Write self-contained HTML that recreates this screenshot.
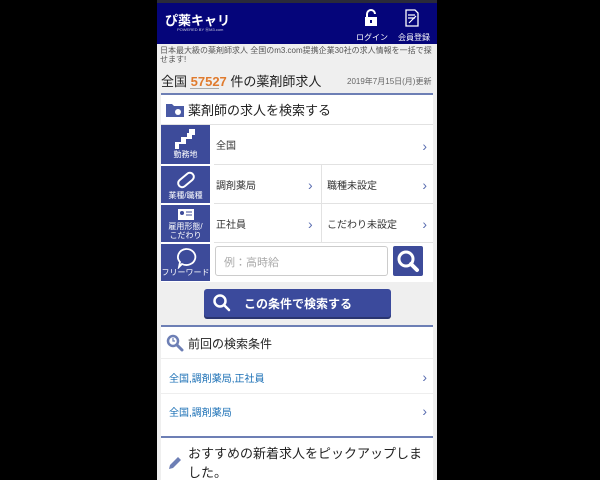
<!DOCTYPE html>
<html><head><meta charset="utf-8"><style>
*{margin:0;padding:0;box-sizing:border-box}
body{width:600px;height:480px;background:#000;font-family:"Liberation Sans","Noto Sans CJK JP",sans-serif;overflow:hidden;position:relative}
#p{position:absolute;left:157px;top:0;width:280px;height:480px;background:#efefef;overflow:hidden}
.hd{height:44px;background:#05057a;position:relative;color:#fff;border-top:3px solid #2a2a3a}
.abs{position:absolute}
.card{position:absolute;left:4px;width:272px;background:#fff}
.chev{position:absolute;color:#5a6db0;font-size:14px}
.ic{position:absolute;left:4px;width:49px;background:#3d4b9a;color:#fff;font-size:8px;text-align:center}
.row{position:absolute;left:53px;right:0;border-bottom:1px solid #e2e2e2;font-size:10px;color:#333}
</style></head><body><div id="p">
<div class="hd">
 <div class="abs" style="left:8px;top:7px;font-size:13px;font-weight:bold;letter-spacing:0">ぴ薬キャリ</div>
 <div class="abs" style="left:20px;top:24px;font-size:4px;color:#ccd">POWERED BY ⓂM3.com</div>
 <svg class="abs" style="left:206px;top:6px" width="16" height="18" viewBox="0 0 16 18"><path d="M4 8V5a4 4 0 0 1 8 0" fill="none" stroke="#fff" stroke-width="2"/><rect x="2" y="8" width="12" height="9" fill="#fff"/><rect x="7" y="11" width="2" height="3" fill="#05057a"/></svg>
 <svg class="abs" style="left:247px;top:6px" width="16" height="18" viewBox="0 0 16 18"><path d="M2 1h9l3 3v13H2z" fill="none" stroke="#fff" stroke-width="1.3"/><path d="M4 6h7M4 9h7M5 14l7-7" stroke="#fff" stroke-width="1.2"/></svg>
 <div class="abs" style="left:199px;top:29px;font-size:8px">ログイン</div>
 <div class="abs" style="left:241px;top:29px;font-size:8px">会員登録</div>
</div>
<div class="abs" style="left:3px;top:46px;width:276px;font-size:8px;line-height:9px;color:#555">日本最大級の薬剤師求人 全国のm3.com提携企業30社の求人情報を一括で探せます!</div>
<div class="abs" style="left:4px;top:71px;font-size:13px;color:#222">全国 <b style="color:#e07b2e">57527</b> 件の薬剤師求人</div>
<div class="abs" style="left:33px;top:88px;width:29px;height:1px;background:#aaa"></div>
<div class="abs" style="left:190px;top:76px;font-size:8px;color:#666">2019年7月15日(月)更新</div>
<div class="abs" style="left:4px;top:93px;width:272px;height:2px;background:#6d7fb5"></div>
<div class="card" style="top:95px;height:187px">
 <svg class="abs" style="left:5px;top:7px" width="18" height="15" viewBox="0 0 18 15"><path d="M0 2h6l2 2h10v11H0z" fill="#4a5aa5"/><circle cx="12" cy="10" r="3" fill="#fff"/></svg>
 <div class="abs" style="left:27px;top:5px;font-size:13px;color:#222">薬剤師の求人を検索する</div>
</div>
<div class="abs" style="left:4px;top:124px;width:272px;height:1px;background:#e2e2e2"></div>
<div class="ic" style="top:125px;height:39px"><svg style="margin-top:4px" width="22" height="20" viewBox="0 0 22 20"><path d="M14 0h6v6h-3v4h-6v5H4v5H0v-7h6V8h6V4h2z" fill="#fff"/></svg><div style="margin-top:-2px">勤務地</div></div>
<div class="ic" style="top:165px;height:38px;border-top:1px solid #fff"><svg style="margin-top:4px" width="22" height="20" viewBox="0 0 22 20"><rect x="2" y="6" width="18" height="8" rx="4" transform="rotate(-40 11 10)" fill="none" stroke="#fff" stroke-width="2"/></svg><div style="margin-top:-2px">業種/職種</div></div>
<div class="ic" style="top:204px;height:38px;border-top:1px solid #fff;line-height:9px"><svg style="margin-top:3px" width="16" height="12" viewBox="0 0 16 12"><rect x="0" y="1" width="16" height="11" fill="#fff"/><circle cx="4" cy="5" r="2" fill="#3d4b9a"/><path d="M8 4h6M8 7h6" stroke="#3d4b9a"/></svg><div>雇用形態/<br>こだわり</div></div>
<div class="ic" style="top:243px;height:38px;border-top:1px solid #fff"><svg style="margin-top:3px" width="22" height="22" viewBox="0 0 22 22"><path d="M11 2a9 8 0 1 1-4 15l-3 3 1-5A9 8 0 0 1 11 2z" fill="none" stroke="#fff" stroke-width="1.8"/></svg><div style="margin-top:-4px">フリーワード</div></div>
<div class="row" style="top:125px;height:40px;left:57px;width:219px"><span class="abs" style="left:2px;top:12px">全国</span><span class="chev" style="right:6px;top:13px">›</span></div>
<div class="row" style="top:165px;height:39px;left:57px;width:219px"><span class="abs" style="left:2px;top:12px">調剤薬局</span><span class="chev" style="left:94px;top:12px">›</span><div class="abs" style="left:107px;top:0;width:1px;height:38px;background:#e2e2e2"></div><span class="abs" style="left:113px;top:12px">職種未設定</span><span class="chev" style="right:6px;top:12px">›</span></div>
<div class="row" style="top:204px;height:39px;left:57px;width:219px"><span class="abs" style="left:2px;top:12px">正社員</span><span class="chev" style="left:94px;top:12px">›</span><div class="abs" style="left:107px;top:0;width:1px;height:38px;background:#e2e2e2"></div><span class="abs" style="left:113px;top:12px">こだわり未設定</span><span class="chev" style="right:6px;top:12px">›</span></div>
<div class="abs" style="left:58px;top:246px;width:173px;height:30px;border:1px solid #ccc;border-radius:3px;background:#fff;font-size:11px;color:#aaa;padding:7px 8px">例：高時給</div>
<div class="abs" style="left:236px;top:246px;width:30px;height:30px;background:#3d4b9a;border-radius:2px"><svg width="30" height="30" viewBox="0 0 30 30"><circle cx="13" cy="13" r="7" fill="none" stroke="#fff" stroke-width="3"/><path d="M18 18l6 6" stroke="#fff" stroke-width="4" stroke-linecap="round"/></svg></div>
<div class="abs" style="left:47px;top:289px;width:187px;height:28px;background:#3b4a9c;border-radius:3px;box-shadow:0 2px 0 #2a3570;color:#fff;font-size:12px;font-weight:bold">
 <svg class="abs" style="left:8px;top:4px" width="20" height="20" viewBox="0 0 20 20"><circle cx="8" cy="8" r="5.5" fill="none" stroke="#fff" stroke-width="2.5"/><path d="M12 12l5 5" stroke="#fff" stroke-width="2.5" stroke-linecap="round"/></svg>
 <span class="abs" style="left:40px;top:6px">この条件で検索する</span></div>
<div class="abs" style="left:4px;top:325px;width:272px;height:2px;background:#6d7fb5"></div>
<div class="card" style="top:327px;height:116px">
 <svg class="abs" style="left:5px;top:7px" width="18" height="18" viewBox="0 0 18 18"><circle cx="7" cy="7" r="5" fill="none" stroke="#6d7fb5" stroke-width="2.5"/><path d="M11 11l5 5" stroke="#6d7fb5" stroke-width="3" stroke-linecap="round"/><path d="M7 4v3h2" stroke="#6d7fb5" stroke-width="1.2" fill="none"/></svg>
 <div class="abs" style="left:27px;top:8px;font-size:12px;color:#222">前回の検索条件</div>
 <div class="abs" style="left:0;top:31px;width:272px;height:1px;background:#eee"></div>
 <div class="abs" style="left:8px;top:43px;font-size:10px;color:#1a6fb5">全国,調剤薬局,正社員</div><span class="chev" style="right:6px;top:42px">›</span>
 <div class="abs" style="left:0;top:66px;width:272px;height:1px;background:#eee"></div>
 <div class="abs" style="left:8px;top:77px;font-size:10px;color:#1a6fb5">全国,調剤薬局</div><span class="chev" style="right:6px;top:76px">›</span>
</div>
<div class="abs" style="left:4px;top:436px;width:272px;height:2px;background:#6d7fb5"></div>
<div class="card" style="top:438px;height:50px">
 <svg class="abs" style="left:6px;top:17px" width="16" height="16" viewBox="0 0 16 16"><path d="M2 14l1-4 8-8 3 3-8 8z" fill="#6d7fb5"/></svg>
 <div class="abs" style="left:27px;top:6px;font-size:13px;line-height:19px;color:#222;width:240px">おすすめの新着求人をピックアップしました。</div>
</div>
</div></body></html>
